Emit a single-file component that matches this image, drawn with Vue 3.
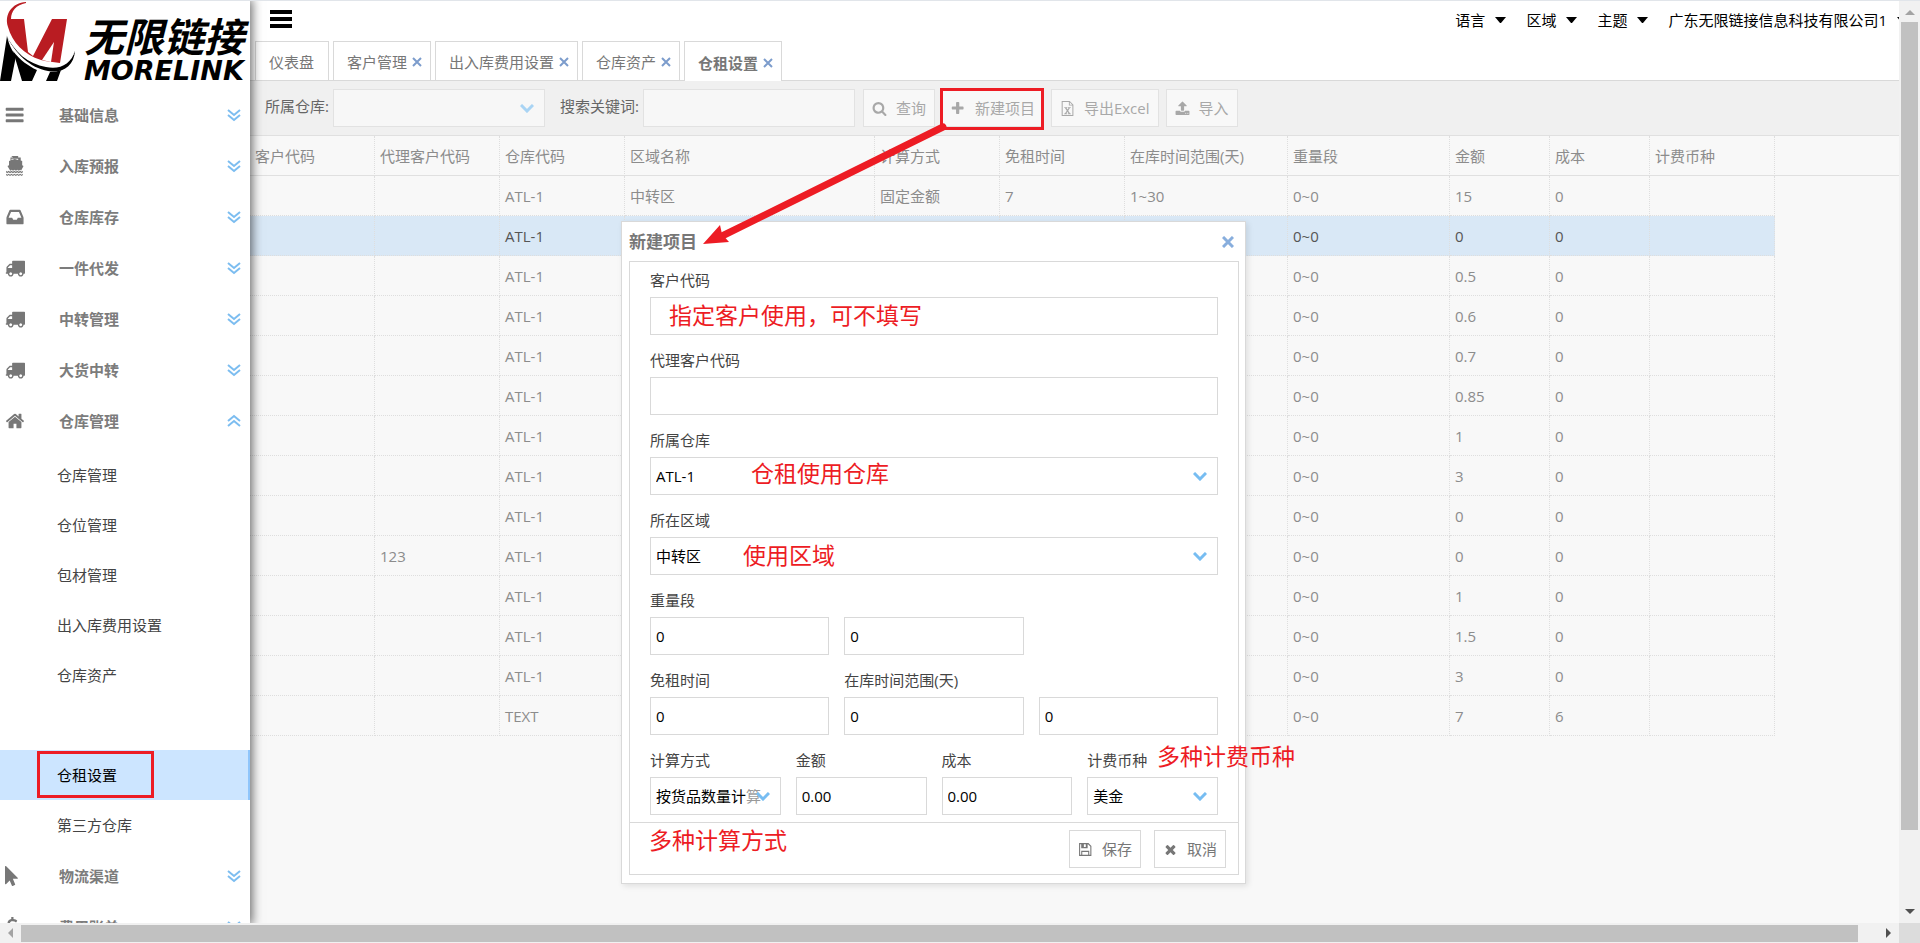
<script setup>
import { ref } from 'vue'

const icons = {
  bars: 'M1664 1344v128q0 26-19 45t-45 19h-1472q-26 0-45-19t-19-45v-128q0-26 19-45t45-19h1472q26 0 45 19t19 45zm0-512v128q0 26-19 45t-45 19h-1472q-26 0-45-19t-19-45v-128q0-26 19-45t45-19h1472q26 0 45 19t19 45zm0-512v128q0 26-19 45t-45 19h-1472q-26 0-45-19t-19-45v-128q0-26 19-45t45-19h1472q26 0 45 19t19 45z',
  ship: 'M560 0h620v130h230v270l130 50v380l120 60-210 400-90-50-120 90-130-90-130 90-130-90-130 90-120-90-130 90-250-440 140-60v-380l130-50v-270h230zM580 250v110l300-100 300 100v-110zM90 1330l110 90 120-90 130 90 130-90 130 90 130-90 130 90 130-90 130 90 130-90 130 90 110-90v130l-110 90-130-90-130 90-130-90-130 90-130-90-130 90-130-90-130 90-130-90-120 90-110-90zM90 1580l110 90 120-90 130 90 130-90 130 90 130-90 130 90 130-90 130 90 130-90 130 90 110-90v120l-110 90-130-90-130 90-130-90-130 90-130-90-130 90-130-90-130 90-130-90-120 90-110-90z',
  inbox: 'M1151 960h316q-1-3-2.500-8t-2.500-8l-212-496h-708l-212 496q-1 2-2.500 8t-2.500 8h316l95 192h320zm513 30v482q0 26-19 45t-45 19h-1408q-26 0-45-19t-19-45v-482q0-62 25-123l238-552q10-25 36.500-42t52.500-17h832q26 0 52.500 17t36.500 42l238 552q25 61 25 123z',
  truck: 'M640 1408q0-52-38-90t-90-38-90 38-38 90 38 90 90 38 90-38 38-90zm-384-512h384v-256h-158q-13 0-22 9l-195 195q-9 9-9 22v30zm1280 512q0-52-38-90t-90-38-90 38-38 90 38 90 90 38 90-38 38-90zm256-1088v1024q0 15-4 26.500t-13.500 18.500-16.500 11.500-23.500 6-22.500 2-25.500 0-22.500-.5q0 106-75 181t-181 75-181-75-75-181h-384q0 106-75 181t-181 75-181-75-75-181h-64q-3 0-22.500.5t-25.500 0-22.500-2-23.500-6-16.500-11.500-13.500-18.500-4-26.500q0-26 19-45t45-19v-320q0-8-.5-35t0-38 2.500-34.500 6.500-37 14-30.500 22.500-30l198-198q19-19 50.500-32t58.500-13h160v-192q0-26 19-45t45-19h1024q26 0 45 19t19 45z',
  home: 'M1472 992v480q0 26-19 45t-45 19h-384v-384h-256v384h-384q-26 0-45-19t-19-45v-480q0-1 .5-3t.5-3l575-474 575 474q1 2 1 6zm223-69l-62 74q-8 9-21 11h-3q-13 0-21-7l-692-577-692 577q-12 8-24 7-13-2-21-11l-62-74q-8-10-7-23.500t11-21.500l719-599q32-26 76-26t76 26l244 204v-195q0-14 9-23t23-9h192q14 0 23 9t9 23v408l219 182q10 8 11 21.500t-7 23.500z',
  pointer: 'M1133 1043q31 30 14 69-17 40-59 40h-382l201 476q10 25 0 49t-34 35l-177 75q-25 10-49 0t-35-34l-191-452-312 312q-19 19-45 19-12 0-24-5-40-17-40-59v-1504q0-42 40-59 12-5 24-5 27 0 45 19z',
  dollar: 'M560 0h200v190c150 20 260 70 340 140l-110 170c-90-70-190-110-310-110-140 0-230 60-230 150 0 250 690 130 690 620 0 220-150 370-380 410v220h-200v-210c-170-20-310-90-400-190l140-160c110 100 230 150 370 150 150 0 240-70 240-180 0-280-690-150-690-620 0-210 140-350 340-390z',
  search: 'M1216 832q0-185-131.500-316.500t-316.500-131.500-316.500 131.500-131.500 316.500 131.500 316.500 316.500 131.500 316.500-131.500 131.500-316.500zm512 832q0 52-38 90t-90 38q-54 0-90-38l-343-342q-179 124-399 124-143 0-273.500-55.500t-225-150-150-225-55.500-273.500 55.500-273.500 150-225 225-150 273.500-55.500 273.500 55.500 225 150 150 225 55.500 273.500q0 220-124 399l343 343q37 37 37 90z',
  plus: 'M1500 740v192q0 40-28 68t-68 28h-416v416q0 40-28 68t-68 28h-192q-40 0-68-28t-28-68v-416h-416q-40 0-68-28t-28-68v-192q0-40 28-68t68-28h416v-416q0-40 28-68t68-28h192q40 0 68 28t28 68v416h416q40 0 68 28t28 68z',
  excel: 'M200 0h960l440 440v1352h-1400zM320 120v1552h1160v-1120h-420v-432zM1170 160v280h280zM500 740h360v100h-80l120 190 120-190h-80v-100h340v100h-90l-210 310 230 340h90v100h-370v-100h90l-130-210-140 210h90v100h-350v-100h90l230-330-220-320h-70z',
  upload: 'M1344 1472q0-26-19-45t-45-19-45 19-19 45 19 45 45 19 45-19 19-45zm256 0q0-26-19-45t-45-19-45 19-19 45 19 45 45 19 45-19 19-45zm128-224v320q0 40-28 68t-68 28h-1472q-40 0-68-28t-28-68v-320q0-40 28-68t68-28h427q21 56 70.500 92t110.500 36h256q61 0 110.500-36t70.500-92h427q40 0 68 28t28 68zm-325-648q-17 40-59 40h-256v448q0 26-19 45t-45 19h-256q-26 0-45-19t-19-45v-448h-256q-42 0-59-40-17-39 14-69l448-448q18-19 45-19t45 19l448 448q31 30 14 69z',
  save: 'M128 128h1120l352 352v1184h-1472zM256 256v1280h128v-480h960v480h128v-1000l-280-280h-40v480h-768v-480zM512 1180v356h704v-356zM700 256v350h230v-350z',
  times: 'M1490 1322q0 40-28 68l-136 136q-28 28-68 28t-68-28l-294-294-294 294q-28 28-68 28t-68-28l-136-136q-28-28-28-68t28-68l294-294-294-294q-28-28-28-68t28-68l136-136q28-28 68-28t68 28l294 294 294-294q28-28 68-28t68 28l136 136q28 28 28 68t-28 68l-294 294 294 294q28 28 28 68z'
}

const menu = [
  { name: '基础信息', icon: 'bars' },
  { name: '入库预报', icon: 'ship' },
  { name: '仓库库存', icon: 'inbox' },
  { name: '一件代发', icon: 'truck' },
  { name: '中转管理', icon: 'truck' },
  { name: '大货中转', icon: 'truck' },
  {
    name: '仓库管理',
    icon: 'home',
    children: ['仓库管理', '仓位管理', '包材管理', '出入库费用设置', '仓库资产', '', '仓租设置', '第三方仓库']
  },
  { name: '物流渠道', icon: 'pointer' },
  { name: '费用账单', icon: 'dollar' }
]

const tabs = ['仪表盘', '客户管理', '出入库费用设置', '仓库资产', '仓租设置']
const current = '仓租设置'
const accountMenus = ['语言', '区域', '主题', '广东无限链接信息科技有限公司1']

const columns = [
  { title: '客户代码', width: 125 },
  { title: '代理客户代码', width: 125 },
  { title: '仓库代码', width: 125 },
  { title: '区域名称', width: 250 },
  { title: '计算方式', width: 125 },
  { title: '免租时间', width: 125 },
  { title: '在库时间范围(天)', width: 163 },
  { title: '重量段', width: 162 },
  { title: '金额', width: 100 },
  { title: '成本', width: 100 },
  { title: '计费币种', width: 125 }
]

const row = (amount, cost = '0', agent = '', code = 'ATL-1') =>
  ['', agent, code, '', '', '', '', '0~0', amount, cost, '']

const rows = [
  ['', '', 'ATL-1', '中转区', '固定金额', '7', '1~30', '0~0', '15', '0', ''],
  row('0'),
  row('0.5'),
  row('0.6'),
  row('0.7'),
  row('0.85'),
  row('1'),
  row('3'),
  row('0'),
  row('0', '0', '123'),
  row('1'),
  row('1.5'),
  row('3'),
  row('7', '6', '', 'TEXT')
]
const selectedRow = 1

const keyword = ref('')
const form = ref({
  customer: '',
  agent: '',
  weightFrom: '0',
  weightTo: '0',
  freeDays: '0',
  daysFrom: '0',
  daysTo: '0',
  amount: '0.00',
  cost: '0.00'
})
</script>

<template>
  <div class="page">
    <div class="app">
      <aside class="sidebar">
        <div class="logo">
          <svg class="mark" viewBox="0 0 80 82" aria-hidden="true">
            <path fill="#000" d="M7 35C9 44 12 50 16 55L11 80H0z" />
            <path fill="#000" d="M13 50C20 59 28 65 37 69L32 80H22z" />
            <path fill="#000" d="M50 71C55 71 58 70 61 69L57 80H46z" />
            <path fill="#b91c22" d="M26 1C12 2 4 13 8 26C12 41 24 54 41 59L45 60L60 62L67 18H52L33 55L28 51L24 18H11C11 10 16 4 26 2z" />
            <path fill="#fff" d="M54 41L42 59L51 61z" />
            <path fill="#000" d="M6 34C15 52 30 67 48 70C62 73 74 65 75 50C70 62 59 67 45 64C28 60 14 49 6 34z" />
            <path fill="#fff" d="M6 33C14 48 28 59 45 62C59 65 70 60 75 50C71 63 60 69 46 66C28 63 14 51 6 33z" />
          </svg>
          <div class="brand">
            <span class="brand-cn">无限链接</span>
            <span class="brand-en">MORELINK</span>
          </div>
        </div>
        <ul class="menu">
          <li v-for="item in menu" :key="item.name">
            <button type="button" class="menu-item">
              <svg class="menu-icon" viewBox="0 0 1792 1792" aria-hidden="true">
                <path :d="icons[item.icon]" fill-rule="evenodd" />
              </svg>
              <span class="menu-name">{{ item.name }}</span>
              <svg class="fold" :class="{ open: item.children }" viewBox="0 0 14 14" aria-hidden="true">
                <path d="M1 2l6 5 6-5M1 7l6 5 6-5" />
              </svg>
            </button>
            <ul v-if="item.children" class="submenu">
              <li v-for="child in item.children" :key="child">
                <a href="#" class="sub-item" :class="{ active: child === current }">{{ child }}</a>
              </li>
            </ul>
          </li>
        </ul>
      </aside>

      <main class="content">
        <header class="topbar">
          <button type="button" class="toggle" aria-label="菜单">
            <span></span><span></span><span></span>
          </button>
          <nav class="account">
            <button v-for="name in accountMenus" :key="name" type="button" class="account-item">
              {{ name }}
              <svg viewBox="0 0 11 6" aria-hidden="true"><path d="M0 0h11L6 6H5z" /></svg>
            </button>
          </nav>
        </header>

        <nav class="tabs">
          <div v-for="(tab, i) in tabs" :key="tab" class="tab" :class="{ active: tab === current, closable: i > 0 }">
            <a href="#">{{ tab }}</a>
            <button v-if="i > 0" type="button" class="tab-close" :aria-label="'关闭' + tab">
              <svg viewBox="0 0 10 10" aria-hidden="true"><path d="M1 1l8 8M9 1l-8 8" /></svg>
            </button>
          </div>
        </nav>

        <div class="toolbar">
          <label for="q-warehouse">所属仓库:</label>
          <div class="select-box">
            <select id="q-warehouse" class="control"><option></option></select>
            <span class="arrow"><svg viewBox="0 0 14 9" aria-hidden="true"><path d="M1 1l6 6 6-6" /></svg></span>
          </div>
          <label for="q-keyword" class="keyword-label">搜索关键词:</label>
          <input id="q-keyword" v-model="keyword" class="control keyword" type="text" />
          <div class="tools">
            <button type="button" class="tool"><svg viewBox="0 0 1792 1792"><path :d="icons.search" /></svg>查询</button>
            <button type="button" class="tool"><svg viewBox="0 0 1792 1792"><path :d="icons.plus" /></svg>新建项目</button>
            <button type="button" class="tool"><svg viewBox="0 0 1792 1792"><path fill-rule="evenodd" :d="icons.excel" /></svg>导出Excel</button>
            <button type="button" class="tool"><svg viewBox="0 0 1792 1792"><path :d="icons.upload" /></svg>导入</button>
          </div>
        </div>

        <div class="grid">
          <table>
            <colgroup>
              <col v-for="c in columns" :key="c.title" :style="{ width: c.width + 'px' }" />
              <col />
            </colgroup>
            <thead>
              <tr>
                <th v-for="c in columns" :key="c.title" scope="col">{{ c.title }}</th>
                <td class="filler"></td>
              </tr>
            </thead>
            <tbody>
              <tr v-for="(r, i) in rows" :key="i" :class="{ selected: i === selectedRow }">
                <td v-for="(cell, j) in r" :key="j">{{ cell }}</td>
              </tr>
            </tbody>
          </table>
        </div>
      </main>
    </div>

    <div class="vbar" aria-hidden="true">
      <i class="up"></i>
      <b></b>
      <i class="down"></i>
    </div>
    <div class="hbar" aria-hidden="true">
      <i class="left"></i>
      <b></b>
      <i class="right"></i>
    </div>
    <div class="corner" aria-hidden="true"></div>

    <section class="dialog" role="dialog" aria-labelledby="dialog-title">
      <header class="dialog-head">
        <h2 id="dialog-title">新建项目</h2>
        <button type="button" class="dialog-close" aria-label="关闭">
          <svg viewBox="0 0 12 12" aria-hidden="true"><path d="M1 1l10 10M11 1l-10 10" /></svg>
        </button>
      </header>
      <form class="dialog-body" @submit.prevent>
        <div class="fields">
          <div class="field wide">
            <label for="f-customer">客户代码</label>
            <input id="f-customer" v-model="form.customer" class="control" type="text" />
          </div>
          <div class="field wide">
            <label for="f-agent">代理客户代码</label>
            <input id="f-agent" v-model="form.agent" class="control" type="text" />
          </div>
          <div class="field wide">
            <label for="f-warehouse">所属仓库</label>
            <div class="select-box">
              <select id="f-warehouse" class="control"><option>ATL-1</option></select>
              <span class="arrow"><svg viewBox="0 0 14 9" aria-hidden="true"><path d="M1 1l6 6 6-6" /></svg></span>
            </div>
          </div>
          <div class="field wide">
            <label for="f-area">所在区域</label>
            <div class="select-box">
              <select id="f-area" class="control"><option>中转区</option></select>
              <span class="arrow"><svg viewBox="0 0 14 9" aria-hidden="true"><path d="M1 1l6 6 6-6" /></svg></span>
            </div>
          </div>
          <div class="field third">
            <label for="f-weight-from">重量段</label>
            <input id="f-weight-from" v-model="form.weightFrom" class="control" type="text" />
          </div>
          <div class="field third">
            <label for="f-weight-to"></label>
            <input id="f-weight-to" v-model="form.weightTo" class="control" type="text" aria-label="重量段上限" />
          </div>
          <div class="field third first">
            <label for="f-free">免租时间</label>
            <input id="f-free" v-model="form.freeDays" class="control" type="text" />
          </div>
          <div class="field third">
            <label for="f-days-from">在库时间范围(天)</label>
            <input id="f-days-from" v-model="form.daysFrom" class="control" type="text" />
          </div>
          <div class="field third">
            <label for="f-days-to"></label>
            <input id="f-days-to" v-model="form.daysTo" class="control" type="text" aria-label="在库时间上限" />
          </div>
          <div class="field quarter">
            <label for="f-method">计算方式</label>
            <div class="select-box">
              <select id="f-method" class="control"><option>按货品数量计算</option></select>
              <span class="arrow"><svg viewBox="0 0 14 9" aria-hidden="true"><path d="M1 1l6 6 6-6" /></svg></span>
            </div>
          </div>
          <div class="field quarter">
            <label for="f-amount">金额</label>
            <input id="f-amount" v-model="form.amount" class="control" type="text" />
          </div>
          <div class="field quarter">
            <label for="f-cost">成本</label>
            <input id="f-cost" v-model="form.cost" class="control" type="text" />
          </div>
          <div class="field quarter">
            <label for="f-currency">计费币种</label>
            <div class="select-box">
              <select id="f-currency" class="control"><option>美金</option></select>
              <span class="arrow"><svg viewBox="0 0 14 9" aria-hidden="true"><path d="M1 1l6 6 6-6" /></svg></span>
            </div>
          </div>
        </div>
        <footer class="dialog-foot">
          <button type="submit" class="tool"><svg viewBox="0 0 1792 1792"><path fill-rule="evenodd" :d="icons.save" /></svg>保存</button>
          <button type="button" class="tool"><svg viewBox="0 0 1792 1792"><path :d="icons.times" /></svg>取消</button>
        </footer>
      </form>
    </section>

    <div class="mark-box side-box"></div>
    <div class="mark-box tool-box"></div>
    <svg class="pointer-line" viewBox="0 0 250 126" aria-hidden="true">
      <path d="M243 7L20 117" fill="none" stroke="#ed1c24" stroke-width="7" stroke-linecap="round" />
      <path d="M3 124L20 105L22 114L29 122z" fill="#ed1c24" />
    </svg>
    <p class="note note-customer">指定客户使用，可不填写</p>
    <p class="note note-warehouse">仓租使用仓库</p>
    <p class="note note-area">使用区域</p>
    <p class="note note-currency">多种计费币种</p>
    <p class="note note-method">多种计算方式</p>
  </div>
</template>

<style>
body {
  margin: 0;
  overflow: hidden;
}
</style>

<style scoped>
* {
  box-sizing: border-box;
}

.page {
  position: relative;
  display: grid;
  grid-template-columns: minmax(0, 1fr) 21px;
  grid-template-rows: minmax(0, 1fr) 20px;
  height: 100vh;
  overflow: hidden;
  border-top: 1px solid #e1e5ea;
  background: #f0f0f0;
  color: #444;
  font: 15px/20px "Open Sans", "Noto Sans CJK SC", sans-serif;
}

ul {
  margin: 0;
  padding: 0;
  list-style: none;
}

a {
  color: inherit;
  text-decoration: none;
}

button {
  padding: 0;
  border: 0;
  background: none;
  color: inherit;
  font: inherit;
}

.app {
  display: flex;
  overflow: hidden;
}

.sidebar {
  position: relative;
  z-index: 1;
  flex: none;
  width: 250px;
  background: #fff;
  box-shadow: 0 0 10px 2px rgba(0, 0, 0, 0.6);
}

.logo {
  display: flex;
  height: 88px;
  overflow: hidden;
  color: #000;
  white-space: nowrap;
}

.mark {
  flex: none;
  width: 80px;
  height: 82px;
}

.brand {
  display: flex;
  flex-direction: column;
  padding: 13px 0 0 4px;
  font-style: italic;
  font-weight: 700;
}

.brand-cn {
  font-size: 40px;
  line-height: 46px;
}

.brand-en {
  font-family: "DejaVu Sans", sans-serif;
  font-size: 27px;
  line-height: 22px;
}

.menu-item {
  display: flex;
  align-items: center;
  width: 100%;
  height: 51px;
  padding: 0 9px 0 5px;
  color: #7c7c7c;
  text-align: left;
}

.menu-icon {
  width: 20px;
  height: 20px;
  fill: #777;
}

.menu-name {
  flex: 1;
  padding-left: 34px;
  font-weight: 600;
}

.fold {
  width: 14px;
  height: 14px;
  fill: none;
  stroke: #7cbdf0;
  stroke-width: 2;
}

.fold.open {
  transform: rotate(180deg);
}

.submenu {
  padding: 4px 0 0;
}

.sub-item {
  display: block;
  height: 50px;
  padding-left: 57px;
  line-height: 50px;
}

.sub-item.active {
  border-right: 2px solid #8fc5fb;
  background: #cce5ff;
  color: #000;
}

.content {
  display: flex;
  flex: 1;
  flex-direction: column;
  min-width: 0;
  background: #f8f8f8;
}

.topbar {
  display: flex;
  align-items: flex-start;
  justify-content: space-between;
  height: 40px;
  padding: 9px 0 0 20px;
  overflow: hidden;
  background: #fff;
}

.toggle {
  display: grid;
  gap: 3px;
  width: 22px;
}

.toggle span {
  height: 4px;
  background: #000;
}

.account {
  display: flex;
  gap: 20px;
  margin-right: -9px;
  color: #000;
  white-space: nowrap;
}

.account-item {
  display: flex;
  gap: 10px;
  align-items: center;
}

.account-item svg {
  width: 11px;
  height: 6px;
}

.tabs {
  display: flex;
  gap: 4px;
  height: 40px;
  padding-left: 5px;
  border-bottom: 1px solid #d9d9d9;
  background: #fff;
}

.tab {
  display: flex;
  gap: 5px;
  align-items: center;
  height: 39px;
  padding: 2px 14px 0 13px;
  border: 1px solid #d9d9d9;
  border-bottom: 0;
  background: #fff;
  color: #777;
  white-space: nowrap;
}

.tab.closable {
  padding-right: 8px;
}

.tab.active {
  height: 40px;
  font-weight: 600;
}

.tab-close {
  display: flex;
  width: 10px;
}

.tab-close svg {
  width: 10px;
  height: 10px;
  fill: none;
  stroke: #7c9ccc;
  stroke-width: 2;
}

.toolbar {
  display: flex;
  align-items: center;
  height: 55px;
  padding-left: 15px;
  border-bottom: 1px solid #e0e0e0;
  background: #f0f0f0;
  color: #666;
  white-space: nowrap;
}

.toolbar > label {
  padding: 0 4px 4px 0;
}

.toolbar > .keyword-label {
  padding-left: 15px;
}

.control {
  display: block;
  width: 100%;
  height: 38px;
  margin: 0;
  padding: 0 5px;
  border: 1px solid #d9d9d9;
  border-radius: 0;
  outline: 0;
  background: #fff;
  color: #000;
  font: inherit;
  appearance: none;
}

.select-box {
  position: relative;
}

.arrow {
  position: absolute;
  top: 1px;
  right: 1px;
  bottom: 1px;
  display: flex;
  align-items: center;
  justify-content: center;
  width: 34px;
  background: rgba(255, 255, 255, 0.6);
  pointer-events: none;
}

.arrow svg {
  width: 14px;
  height: 9px;
  fill: none;
  stroke: #77bdf2;
  stroke-width: 3;
}

.toolbar .select-box,
.toolbar .keyword {
  width: 212px;
}

.toolbar .control {
  border-color: #e2e2e2;
  background: #f7f7f7;
}

.toolbar .arrow {
  background: none;
}

.toolbar .arrow svg {
  stroke: #a9d4f4;
}

.tools {
  display: flex;
  gap: 7px;
  padding-left: 8px;
}

.tool {
  display: flex;
  gap: 9px;
  align-items: center;
  height: 38px;
  padding: 0 8px;
  border: 1px solid #e2e2e2;
  background: #f8f8f8;
  color: #a8a8a8;
  white-space: nowrap;
}

.tool svg {
  width: 15px;
  height: 15px;
  fill: currentColor;
}

.grid {
  flex: 1;
  overflow: hidden;
  color: #8c8c8c;
}

table {
  width: 100%;
  border-spacing: 0;
  table-layout: fixed;
}

th,
td {
  height: 40px;
  padding: 0 0 0 5px;
  border-right: 1px dotted #dedede;
  border-bottom: 1px dotted #dedede;
  font-weight: 400;
  text-align: left;
  white-space: nowrap;
}

thead th,
.filler {
  border-bottom: 1px solid #e0e0e0;
}

.filler {
  border-right: 0;
}

.selected td {
  background: #d9e8f6;
  color: #555;
}

.vbar,
.hbar {
  display: flex;
  align-items: center;
  background: #f1f1f1;
}

.vbar {
  flex-direction: column;
}

.vbar i,
.hbar i {
  width: 0;
  height: 0;
  border: 5px solid transparent;
}

.vbar b,
.hbar b {
  background: #c1c1c1;
}

.vbar b {
  width: 17px;
  height: calc(100% - 114px);
  margin-top: 7px;
}

.vbar .up {
  margin-top: 4px;
  border-bottom-color: #a3a3a3;
}

.vbar .down {
  margin: auto 0 4px;
  border-top-color: #505050;
}

.hbar b {
  width: calc(100% - 62px);
  height: 17px;
  margin-left: 8px;
}

.hbar .left {
  margin-left: 3px;
  border-right-color: #a3a3a3;
}

.hbar .right {
  margin: 0 3px 0 auto;
  border-left-color: #505050;
}

.corner {
  background: #dcdcdc;
}

.dialog {
  position: absolute;
  top: 220px;
  left: 621px;
  z-index: 2;
  width: 625px;
  padding: 0 6px 8px 7px;
  border: 1px solid #d9d9d9;
  background: #fff;
  box-shadow: 2px 2px 6px rgba(0, 0, 0, 0.1);
}

.dialog-head {
  display: flex;
  align-items: center;
  justify-content: space-between;
  height: 39px;
  padding-right: 5px;
}

.dialog-head h2 {
  margin: 0;
  color: #777;
  font-size: 17px;
  font-weight: 700;
}

.dialog-close {
  display: flex;
}

.dialog-close svg {
  width: 12px;
  height: 12px;
  fill: none;
  stroke: #88aedd;
  stroke-width: 3;
}

.dialog-body {
  border: 1px solid #d9d9d9;
}

.fields {
  display: grid;
  grid-template-columns: repeat(12, minmax(0, 1fr));
  gap: 11px 15px;
  padding: 4px 20px 7px;
}

.field > label {
  display: block;
  height: 31px;
  line-height: 28px;
  white-space: nowrap;
}

.wide {
  grid-column: span 12;
}

.third {
  grid-column: span 4;
}

.third.first {
  grid-column: 1 / span 4;
}

.quarter {
  grid-column: span 3;
}

.dialog-foot {
  display: flex;
  gap: 13px;
  justify-content: flex-end;
  padding: 7px 12px 6px;
  border-top: 1px solid #d9d9d9;
}

.dialog-foot .tool {
  border-color: #d9d9d9;
  background: #fff;
  color: #777;
}

.mark-box,
.pointer-line,
.note {
  position: absolute;
  z-index: 3;
  pointer-events: none;
}

.mark-box {
  border: 3px solid #ed1c24;
}

.side-box {
  top: 750px;
  left: 37px;
  width: 117px;
  height: 47px;
}

.tool-box {
  top: 87px;
  left: 940px;
  width: 104px;
  height: 42px;
}

.pointer-line {
  top: 119px;
  left: 700px;
  width: 250px;
  height: 126px;
}

.note {
  margin: 0;
  color: #ed1c24;
  font-size: 23px;
  line-height: 30px;
  white-space: nowrap;
}

.note-customer {
  top: 299px;
  left: 669px;
}

.note-warehouse {
  top: 457px;
  left: 751px;
}

.note-area {
  top: 539px;
  left: 743px;
}

.note-currency {
  top: 740px;
  left: 1157px;
}

.note-method {
  top: 824px;
  left: 649px;
}
</style>
